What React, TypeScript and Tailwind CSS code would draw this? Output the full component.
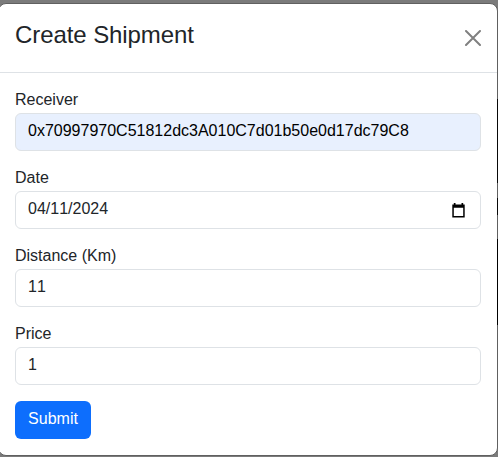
import React from "react";

type FieldProps = { label: string; value: string; filled?: boolean; date?: boolean };

function CalendarIcon() {
  return (
    <svg width="13" height="15" viewBox="0 0 13 15" className="mr-[3px]" aria-hidden="true">
      <path d="M1.8 0h1.7v1.5h6V0h1.7v1.5H12.7V14.5H.3V1.5h1.5zM1.8 4.8v8.3h9.4V4.8z" fill="#000" fillRule="evenodd" />
    </svg>
  );
}

function Field({ label, value, filled, date }: FieldProps) {
  return (
    <label className="mb-4 block">
      <span className="block h-6 leading-[21px]">{label}</span>
      <span
        className={
          "flex h-[38px] items-center justify-between rounded-md border border-[#dee2e6] px-3 " +
          (filled ? "bg-[#e8f0fe] text-black" : "bg-white")
        }
      >
        <span className="-mt-[3px] leading-6 [font-kerning:none]">{value}</span>
        {date && <CalendarIcon />}
      </span>
    </label>
  );
}

export default function App() {
  return (
    <div className="relative h-[457px] w-[498px] overflow-hidden bg-[#7b7b7b] pt-[3px] font-['Liberation_Sans',Arial,sans-serif] text-base text-[#212529]">
      <div className="-ml-0.5 h-[453px] w-[500px] rounded-lg border border-[#606060] bg-white">
        <header className="flex h-[69px] items-center justify-between border-b border-[#dee2e6] px-4">
          <h4 className="-mt-[7px] text-2xl leading-9 tracking-[-0.08px]">Create Shipment</h4>
          <button aria-label="Close" className="flex size-4">
            <svg width="16" height="16" viewBox="0 0 16 16" fill="none" stroke="#808080" strokeWidth="2" strokeLinecap="round">
              <path d="M1 1l14 14M15 1L1 15" />
            </svg>
          </button>
        </header>
        <form className="p-4">
          <Field label="Receiver" value="0x70997970C51812dc3A010C7d01b50e0d17dc79C8" filled />
          <Field label="Date" value="04/11/2024" date />
          <Field label="Distance (Km)" value="11" />
          <Field label="Price" value="1" />
          <button type="button" className="h-[38px] w-[76px] rounded-md bg-[#0d6efd] pb-[3px] text-white">
            Submit
          </button>
        </form>
      </div>
      <div className="absolute top-[99px] right-0 flex w-px flex-col">
        <i className="h-[84px] bg-[#080808]" />
        <i className="h-[15px] bg-[#606060]" />
        <i className="h-[17px] bg-[#080808]" />
        <i className="h-[24px] bg-[#606060]" />
        <i className="h-[86px] bg-black" />
      </div>
    </div>
  );
}
